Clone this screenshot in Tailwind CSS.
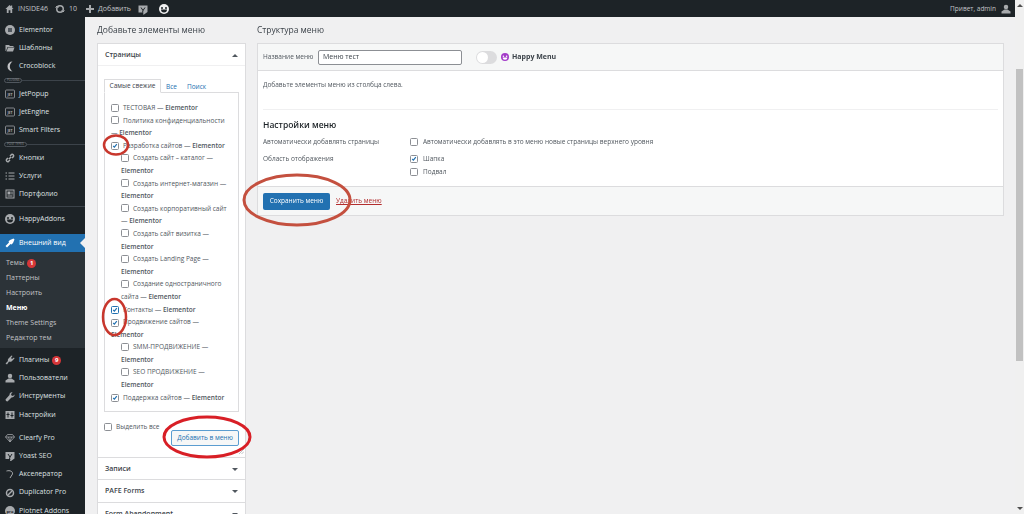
<!DOCTYPE html>
<html lang="ru">
<head>
<meta charset="UTF-8">
<title>Меню</title>
<script src="https://cdn.jsdelivr.net/npm/@tailwindcss/browser@4"></script>
</head>
<body class="bg-[#f0f0f1] font-['Open_Sans',sans-serif] text-[7px] text-[#50575e] overflow-hidden">
<div class="relative flex w-[1024px] h-[514px] overflow-hidden blur-[0.3px]">
  <div class="flex flex-col w-[1015px] h-[514px] shrink-0">
    <!-- top bar -->
    <div class="flex items-center h-[17px] shrink-0 bg-[#1d2327] text-[#c3c4c7] pl-[5px] pt-[1px]">
      <svg class="w-[9px] h-[10px] mr-[4px]" viewBox="0 0 20 20" fill="#a7aaad"><path d="M10 1 1 10h3v9h4v-6h4v6h4v-9h3l-3-3V2h-3v2z"/></svg>
      <span class="w-[28px]">INSIDE46</span>
      <svg class="w-[10px] h-[10px] ml-[9px] mr-[4px]" viewBox="0 0 20 20" fill="none" stroke="#a7aaad" stroke-width="3"><circle cx="10" cy="10" r="6.5"/><path d="M1 7l3-3 3 3M19 13l-3 3-3-3" stroke-width="2"/></svg>
      <span>10</span>
      <span class="ml-[9px] mr-[4px] w-[8px] h-[8px] relative"><span class="absolute left-0 top-[3px] w-[8px] h-[2px] bg-[#a7aaad]"></span><span class="absolute left-[3px] top-0 w-[2px] h-[8px] bg-[#a7aaad]"></span></span>
      <span class="w-[31px]">Добавить</span>
      <svg class="w-[10px] h-[11px] ml-[9px]" viewBox="0 0 20 20"><path d="M1 2h18v13l-7 5h-2l1-4H1z" fill="#a7aaad"/><path d="M6 6l4 6-1 4M14 6l-4 6" fill="none" stroke="#1d2327" stroke-width="2"/></svg>
      <svg class="w-[10px] h-[10px] ml-[11px]" viewBox="0 0 20 20"><circle cx="10" cy="10" r="10" fill="#f0f0f1"/><circle cx="6" cy="8" r="2" fill="#1d2327"/><circle cx="14" cy="8" r="2" fill="#1d2327"/><path d="M4 11h12a6 6 0 0 1-12 0z" fill="#1d2327"/></svg>
      <span class="ml-auto text-[6.5px]">Привет, admin</span>
      <svg class="w-[10px] h-[10px] ml-[5px] mr-[4px]" viewBox="0 0 20 20" fill="#a7aaad"><circle cx="10" cy="6" r="4.5"/><path d="M1 19v-4l6-4h6l6 4v4z"/></svg>
    </div>
    <div class="flex flex-1 min-h-0">
      <!-- sidebar -->
      <div class="w-[85px] shrink-0 bg-[#1d2327] text-[#dfe1e3] overflow-hidden pt-[4px] whitespace-nowrap">
        <div class="flex items-center h-[18px] pl-[5px] gap-[4px]"><svg class="w-[10px] h-[10px]" viewBox="0 0 20 20"><circle cx="10" cy="10" r="10" fill="#a7aaad"/><rect x="6" y="6" width="8" height="8" fill="#50575e"/></svg>Elementor</div>
        <div class="flex items-center h-[18px] pl-[5px] gap-[4px]"><svg class="w-[10px] h-[10px]" viewBox="0 0 20 20" fill="#a7aaad"><path d="M1 4h7l2 2h7v2H5l-3 8H1zM6 9h13l-3 8H3z"/></svg>Шаблоны</div>
        <div class="flex items-center h-[18px] pl-[5px] gap-[4px]"><svg class="w-[10px] h-[11px]" viewBox="0 0 20 20" fill="#c3c4c7"><path d="M15 0a10 10 0 1 0 0 20 12 12 0 0 1 0-20z"/></svg>Crocoblock</div>
        <div class="flex items-center h-[10px] pl-[4px] text-[3px] text-[#8c8f94]"><span class="border border-[#50575e] rounded-full px-[2px] leading-[3px]">PLUGINS</span><span class="flex-1 h-px bg-[#3c434a]"></span></div>
        <div class="flex items-center h-[18px] pl-[5px] gap-[4px]"><svg class="w-[10px] h-[10px]" viewBox="0 0 20 20"><rect x="1" y="2" width="18" height="16" rx="2" fill="none" stroke="#a7aaad" stroke-width="1.5"/><text x="10" y="13" font-size="7" font-weight="700" text-anchor="middle" fill="#a7aaad">JET</text></svg>JetPopup</div>
        <div class="flex items-center h-[18px] pl-[5px] gap-[4px]"><svg class="w-[10px] h-[10px]" viewBox="0 0 20 20"><rect x="1" y="2" width="18" height="16" rx="2" fill="none" stroke="#a7aaad" stroke-width="1.5"/><text x="10" y="13" font-size="7" font-weight="700" text-anchor="middle" fill="#a7aaad">JET</text></svg>JetEngine</div>
        <div class="flex items-center h-[18px] pl-[5px] gap-[4px]"><svg class="w-[10px] h-[10px]" viewBox="0 0 20 20"><rect x="1" y="2" width="18" height="16" rx="2" fill="none" stroke="#a7aaad" stroke-width="1.5"/><text x="10" y="13" font-size="7" font-weight="700" text-anchor="middle" fill="#a7aaad">JET</text></svg>Smart Filters</div>
        <div class="flex items-center h-[10px] pl-[4px] text-[3px] text-[#8c8f94]"><span class="border border-[#50575e] rounded-full px-[2px] leading-[3px]">POST TYPES</span><span class="flex-1 h-px bg-[#3c434a]"></span></div>
        <div class="flex items-center h-[18px] pl-[5px] gap-[4px]"><svg class="w-[10px] h-[10px]" viewBox="0 0 20 20" fill="none" stroke="#a7aaad" stroke-width="3"><path d="M8 12 12 8M6 10l-3 3a3 3 0 0 0 4 4l3-3M14 10l3-3a3 3 0 0 0-4-4l-3 3"/></svg>Кнопки</div>
        <div class="flex items-center h-[18px] pl-[5px] gap-[4px]"><svg class="w-[10px] h-[10px]" viewBox="0 0 20 20" fill="none" stroke="#a7aaad" stroke-width="2"><path d="M1 4h3M7 4h12M1 10h3M7 10h12M1 16h3M7 16h12"/></svg>Услуги</div>
        <div class="flex items-center h-[18px] pl-[5px] gap-[4px]"><svg class="w-[10px] h-[10px]" viewBox="0 0 20 20" fill="#a7aaad"><path d="M1 1h18v18H1zm2 2v14h14V3z"/><path d="M5 5h6v6H5zM13 5h2v6h-2zM5 13h10v2H5z"/></svg>Портфолио</div>
        <div class="h-px bg-[#3c434a] mt-[3px] mb-[3px]"></div>
        <div class="flex items-center h-[18px] pl-[5px] gap-[4px]"><svg class="w-[10px] h-[10px]" viewBox="0 0 20 20"><circle cx="10" cy="10" r="10" fill="#a7aaad"/><circle cx="6" cy="8" r="2" fill="#1d2327"/><circle cx="14" cy="8" r="2" fill="#1d2327"/><path d="M4 11h12a6 6 0 0 1-12 0z" fill="#1d2327"/></svg>HappyAddons</div>
        <div class="h-[6px]"></div>
        <div class="relative flex items-center h-[18px] pl-[5px] gap-[4px] bg-[#2271b1] text-white"><svg class="w-[10px] h-[10px]" viewBox="0 0 20 20" fill="#fff"><path d="M19 3l-2-2-7 3-3 3 1 2-7 7 3 3 7-7 2 1 3-3z"/></svg>Внешний вид<span class="absolute right-0 top-[4px] border-y-[5px] border-r-[5px] border-y-transparent border-r-[#f0f0f1]"></span></div>
        <div class="bg-[#2c3338] text-[#c3c4c7] pl-[6px] pt-[4px] pb-[2px]">
          <div class="flex items-center gap-[3px] h-[15px]">Темы<span class="flex items-center justify-center w-[9px] h-[9px] rounded-full bg-[#d63638] text-white text-[6px] font-bold">1</span></div>
          <div class="flex items-center h-[15px]">Паттерны</div>
          <div class="flex items-center h-[15px]">Настроить</div>
          <div class="flex items-center h-[15px] font-bold text-white">Меню</div>
          <div class="flex items-center h-[15px]">Theme Settings</div>
          <div class="flex items-center h-[15px]">Редактор тем</div>
        </div>
        <div class="h-[3px]"></div>
        <div class="flex items-center h-[18px] pl-[5px] gap-[4px]"><svg class="w-[10px] h-[10px]" viewBox="0 0 20 20" fill="#a7aaad"><path d="M13 1l2 1-3 4 2 2 4-3 1 2-5 5c-2 2-4 2-6 1l-4 6-3-2 5-5c-1-2 0-4 2-6z"/></svg>Плагины<span class="flex items-center justify-center w-[9px] h-[9px] -ml-[1px] rounded-full bg-[#d63638] text-white text-[6px] font-bold">9</span></div>
        <div class="flex items-center h-[18px] pl-[5px] gap-[4px]"><svg class="w-[10px] h-[10px]" viewBox="0 0 20 20" fill="#a7aaad"><circle cx="10" cy="6" r="4.5"/><path d="M1 19v-4l6-4h6l6 4v4z"/></svg>Пользователи</div>
        <div class="flex items-center h-[19px] pl-[5px] gap-[4px]"><svg class="w-[10px] h-[10px]" viewBox="0 0 20 20" fill="#a7aaad"><path d="M19 5l-3 3-3-1-1-3 3-3c-3-1-6 1-6 5L1 15l1 3 3 1 8-8c4 0 7-3 6-6z"/></svg>Инструменты</div>
        <div class="flex items-center h-[18px] pl-[5px] gap-[4px]"><svg class="w-[10px] h-[10px]" viewBox="0 0 20 20" fill="#a7aaad"><path d="M1 2h18v16H1zm4 3v3H3v2h2v5h2v-5h2V8H7V5zm8 0v5h-2v2h2v3h2v-3h2v-2h-2V5z"/></svg>Настройки</div>
        <div class="h-[5px]"></div>
        <div class="flex items-center h-[18px] pl-[5px] gap-[4px]"><svg class="w-[10px] h-[10px]" viewBox="0 0 20 20" fill="none" stroke="#a7aaad" stroke-width="1.5"><path d="M5 3h10l4 5-9 10L1 8zM1 8h18M7 8l3 10 3-10"/></svg>Clearfy Pro</div>
        <div class="flex items-center h-[18px] pl-[5px] gap-[4px]"><svg class="w-[10px] h-[10px]" viewBox="0 0 20 20"><path d="M1 2h18v13l-7 5h-2l1-4H1z" fill="#a7aaad"/><path d="M6 6l4 6-1 4M14 6l-4 6" fill="none" stroke="#1d2327" stroke-width="2"/></svg>Yoast SEO</div>
        <div class="flex items-center h-[18px] pl-[5px] gap-[4px]"><svg class="w-[10px] h-[10px]" viewBox="0 0 20 20" fill="none" stroke="#a7aaad" stroke-width="2"><path d="M3 4c7-2 13 1 12 6l-5 8"/></svg>Акселератор</div>
        <div class="flex items-center h-[19px] pl-[5px] gap-[4px]"><svg class="w-[10px] h-[10px]" viewBox="0 0 20 20" fill="none" stroke="#a7aaad" stroke-width="3"><circle cx="10" cy="10" r="7"/><path d="M6 14 14 6"/></svg>Duplicator Pro</div>
        <div class="flex items-center h-[18px] pl-[5px] gap-[4px]"><svg class="w-[10px] h-[10px]" viewBox="0 0 20 20"><circle cx="10" cy="10" r="10" fill="#a7aaad"/><text x="10" y="13" font-size="8" font-weight="700" text-anchor="middle" fill="#1d2327">pro</text></svg>Piotnet Addons</div>
      </div>
      <!-- content -->
      <div class="flex-1 flex items-start pl-[12px] gap-[11px] min-w-0 text-[6.5px]">
        <!-- add items column -->
        <div class="w-[149px] shrink-0">
          <h2 class="text-[8.5px] font-medium text-[#3c434a] h-[26px] flex items-center">Добавьте элементы меню</h2>
          <div class="relative bg-white border border-[#dcdcde] border-b-0 h-[471px]">
            <div class="flex items-center justify-between h-[22px] pl-[7px] pr-[7px] pt-[1px] border-b border-[#f0f0f1] font-semibold text-[7px] text-[#3c434a]"><span>Страницы</span><span class="border-x-[3px] border-b-[3px] border-x-transparent border-b-[#50575e]"></span></div>
            <div class="pl-[6px] pt-[13px]">
              <div class="flex items-end h-[14px]">
                <span class="relative h-[14px] w-[57px] flex items-center justify-center border border-[#dcdcde] border-b-white bg-white text-[#3c434a]">Самые свежие</span>
                <span class="pl-[5px] pb-[1px] text-[#2271b1]">Все</span><span class="pl-[10px] pb-[1px] text-[#2271b1]">Поиск</span>
              </div>
              <div class="border border-[#dcdcde] w-[135px] h-[320px] pl-[6px] pt-[9px] -mt-px leading-[12.6px] whitespace-nowrap">
                <div><span class="inline-block align-[-1.5px] w-[8px] h-[8px] mr-[4px] border border-[#8c8f94] rounded-[1.5px]"></span>ТЕСТОВАЯ — <b class="font-semibold">Elementor</b></div>
                <div><span class="inline-block align-[-1.5px] w-[8px] h-[8px] mr-[4px] border border-[#8c8f94] rounded-[1.5px]"></span>Политика конфиденциальности<br>— <b class="font-semibold">Elementor</b></div>
                <div><span class="inline-flex align-[-1.5px] w-[8px] h-[8px] mr-[4px] border border-[#8c8f94] rounded-[1.5px]"><svg viewBox="0 0 10 10" fill="none" stroke="#2271b1" stroke-width="2"><path d="M2 5l2 2 4-5"/></svg></span>Разработка сайтов — <b class="font-semibold">Elementor</b></div>
                <div class="pl-[10px]">
                  <div><span class="inline-block align-[-1.5px] w-[8px] h-[8px] mr-[4px] border border-[#8c8f94] rounded-[1.5px]"></span>Создать сайт – каталог —<br><b class="font-semibold">Elementor</b></div>
                  <div><span class="inline-block align-[-1.5px] w-[8px] h-[8px] mr-[4px] border border-[#8c8f94] rounded-[1.5px]"></span>Создать интернет-магазин —<br><b class="font-semibold">Elementor</b></div>
                  <div><span class="inline-block align-[-1.5px] w-[8px] h-[8px] mr-[4px] border border-[#8c8f94] rounded-[1.5px]"></span>Создать корпоративный сайт<br>— <b class="font-semibold">Elementor</b></div>
                  <div><span class="inline-block align-[-1.5px] w-[8px] h-[8px] mr-[4px] border border-[#8c8f94] rounded-[1.5px]"></span>Создать сайт визитка —<br><b class="font-semibold">Elementor</b></div>
                  <div><span class="inline-block align-[-1.5px] w-[8px] h-[8px] mr-[4px] border border-[#8c8f94] rounded-[1.5px]"></span>Создать Landing Page —<br><b class="font-semibold">Elementor</b></div>
                  <div><span class="inline-block align-[-1.5px] w-[8px] h-[8px] mr-[4px] border border-[#8c8f94] rounded-[1.5px]"></span>Создание одностраничного<br>сайта — <b class="font-semibold">Elementor</b></div>
                </div>
                <div><span class="inline-flex align-[-1.5px] w-[8px] h-[8px] mr-[4px] border border-[#2271b1] rounded-[1.5px]"><svg viewBox="0 0 10 10" fill="none" stroke="#2271b1" stroke-width="2"><path d="M2 5l2 2 4-5"/></svg></span>Контакты — <b class="font-semibold">Elementor</b></div>
                <div><span class="inline-flex align-[-1.5px] w-[8px] h-[8px] mr-[4px] border border-[#8c8f94] rounded-[1.5px]"><svg viewBox="0 0 10 10" fill="none" stroke="#2271b1" stroke-width="2"><path d="M2 5l2 2 4-5"/></svg></span>Продвижение сайтов —<br><b class="font-semibold">Elementor</b></div>
                <div class="pl-[10px]">
                  <div><span class="inline-block align-[-1.5px] w-[8px] h-[8px] mr-[4px] border border-[#8c8f94] rounded-[1.5px]"></span>SMM-ПРОДВИЖЕНИЕ —<br><b class="font-semibold">Elementor</b></div>
                  <div><span class="inline-block align-[-1.5px] w-[8px] h-[8px] mr-[4px] border border-[#8c8f94] rounded-[1.5px]"></span>SEO ПРОДВИЖЕНИЕ —<br><b class="font-semibold">Elementor</b></div>
                </div>
                <div><span class="inline-flex align-[-1.5px] w-[8px] h-[8px] mr-[4px] border border-[#8c8f94] rounded-[1.5px]"><svg viewBox="0 0 10 10" fill="none" stroke="#2271b1" stroke-width="2"><path d="M2 5l2 2 4-5"/></svg></span>Поддержка сайтов — <b class="font-semibold">Elementor</b></div>
              </div>
              <div class="flex items-center h-[13px] mt-[8px]"><span class="w-[8px] h-[8px] mr-[4px] border border-[#8c8f94] rounded-[1.5px]"></span>Выделить все</div>
              <div class="flex justify-end w-[135px] mt-[-3px]"><span class="flex items-center justify-center w-[68px] h-[16px] border border-[#5b9dd0] rounded-[2px] bg-[#f6f7f7] text-[#2271b1]">Добавить в меню</span></div>
            </div>
            <svg class="absolute right-[1px] top-[405px] w-[5px] h-[5px]" viewBox="0 0 5 5" stroke="#a7aaad" stroke-width="0.7"><path d="M0 5 5 0M2.5 5 5 2.5"/></svg>
            <div class="mt-[11px] border-t border-[#dcdcde] flex items-center justify-between h-[22px] pl-[7px] pr-[7px] pt-[1px] font-semibold text-[7px] text-[#3c434a]"><span>Записи</span><span class="border-x-[3px] border-t-[3px] border-x-transparent border-t-[#50575e]"></span></div>
            <div class="border-t border-[#dcdcde] flex items-center justify-between h-[23px] pl-[7px] pr-[7px] pt-[1px] font-semibold text-[7px] text-[#3c434a]"><span>PAFE Forms</span><span class="border-x-[3px] border-t-[3px] border-x-transparent border-t-[#50575e]"></span></div>
            <div class="border-t border-[#dcdcde] flex items-center justify-between h-[23px] pl-[7px] pr-[7px] pt-[1px] font-semibold text-[7px] text-[#3c434a]"><span>Form Abandonment</span><span class="border-x-[3px] border-t-[3px] border-x-transparent border-t-[#50575e]"></span></div>
          </div>
        </div>
        <!-- menu structure column -->
        <div class="w-[747px] shrink-0">
          <h2 class="text-[8.5px] font-medium text-[#3c434a] h-[26px] flex items-center">Структура меню</h2>
          <div class="bg-white border border-[#dcdcde] h-[173px] flex flex-col">
            <div class="flex items-center h-[27px] shrink-0 pl-[5px] bg-[#f6f7f7] border-b border-[#dcdcde]">
              <span class="w-[55px]">Название меню</span>
              <span class="flex items-center w-[144px] h-[15px] pl-[4px] bg-white border border-[#8c8f94] rounded-[2px] text-[#3c434a] text-[7px]">Меню тест</span>
              <span class="relative w-[21px] h-[13px] ml-[14px] rounded-full bg-[#dcdcde]"><span class="absolute left-[1px] top-[1px] w-[11px] h-[11px] rounded-full bg-white"></span></span>
              <svg class="w-[8px] h-[8px] ml-[4px]" viewBox="0 0 20 20"><circle cx="10" cy="10" r="10" fill="#a33bc9"/><circle cx="6" cy="8" r="2" fill="#fff"/><circle cx="14" cy="8" r="2" fill="#fff"/><path d="M4 11h12a6 6 0 0 1-12 0z" fill="#fff"/></svg>
              <b class="ml-[3px] font-bold text-[7px] text-[#3c434a]">Happy Menu</b>
            </div>
            <div class="flex-1 px-[5px] pt-[9px]">
              <p class="leading-[9px]">Добавьте элементы меню из столбца слева.</p>
              <div class="h-px bg-[#f0f0f1] mt-[20px]"></div>
              <h3 class="mt-[9px] text-[8.5px] leading-[11px] font-semibold text-[#1d2327]">Настройки меню</h3>
              <div class="flex mt-[7px]">
                <span class="w-[147px] leading-[10px]">Автоматически добавлять страницы</span>
                <span class="flex items-center h-[10px]"><span class="w-[8px] h-[8px] mr-[5px] border border-[#8c8f94] rounded-[1.5px]"></span>Автоматически добавлять в это меню новые страницы верхнего уровня</span>
              </div>
              <div class="flex mt-[7px]">
                <span class="w-[147px] leading-[10px]">Область отображения</span>
                <span class="flex flex-col gap-[2.5px]">
                  <span class="flex items-center h-[10px]"><span class="flex w-[8px] h-[8px] mr-[5px] border border-[#8c8f94] rounded-[1.5px]"><svg viewBox="0 0 10 10" fill="none" stroke="#2271b1" stroke-width="2"><path d="M2 5l2 2 4-5"/></svg></span>Шапка</span>
                  <span class="flex items-center h-[10px]"><span class="w-[8px] h-[8px] mr-[5px] border border-[#8c8f94] rounded-[1.5px]"></span>Подвал</span>
                </span>
              </div>
            </div>
            <div class="flex items-center h-[29px] shrink-0 pl-[5px] bg-[#f6f7f7] border-t border-[#dcdcde]">
              <span class="flex items-center justify-center w-[67px] h-[17px] bg-[#2271b1] rounded-[2px] text-white">Сохранить меню</span>
              <span class="ml-[6px] text-[#b32d2e] underline">Удалить меню</span>
            </div>
          </div>
        </div>
      </div>
    </div>
  </div>
  <!-- scrollbar -->
  <div class="relative flex-1 flex flex-col items-center bg-[#f0f0f0]">
    <span class="mt-[4px] border-x-[3px] border-b-[3px] border-x-transparent border-b-[#505050]"></span>
    <span class="mt-[62px] w-[7px] h-[292px] bg-[#c1c1c1]"></span>
    <span class="mt-auto mb-[4px] border-x-[3px] border-t-[3px] border-x-transparent border-t-[#505050]"></span>
  </div>
  <!-- hand-drawn red marks over the screenshot -->
  <svg class="absolute left-0 top-0 w-[1024px] h-[514px] pointer-events-none" viewBox="0 0 1024 514" fill="none">
    <ellipse cx="116" cy="145" rx="12" ry="9.5" stroke="#c8372d" stroke-width="2.5"/>
    <ellipse cx="114.5" cy="317" rx="11.5" ry="18" stroke="#c8372d" stroke-width="2.5"/>
    <ellipse cx="207" cy="437" rx="43" ry="20" stroke="#d81f26" stroke-width="3"/>
    <ellipse cx="297" cy="200" rx="53" ry="25" stroke="#c4503f" stroke-width="3"/>
  </svg>
</div>
</body>
</html>
